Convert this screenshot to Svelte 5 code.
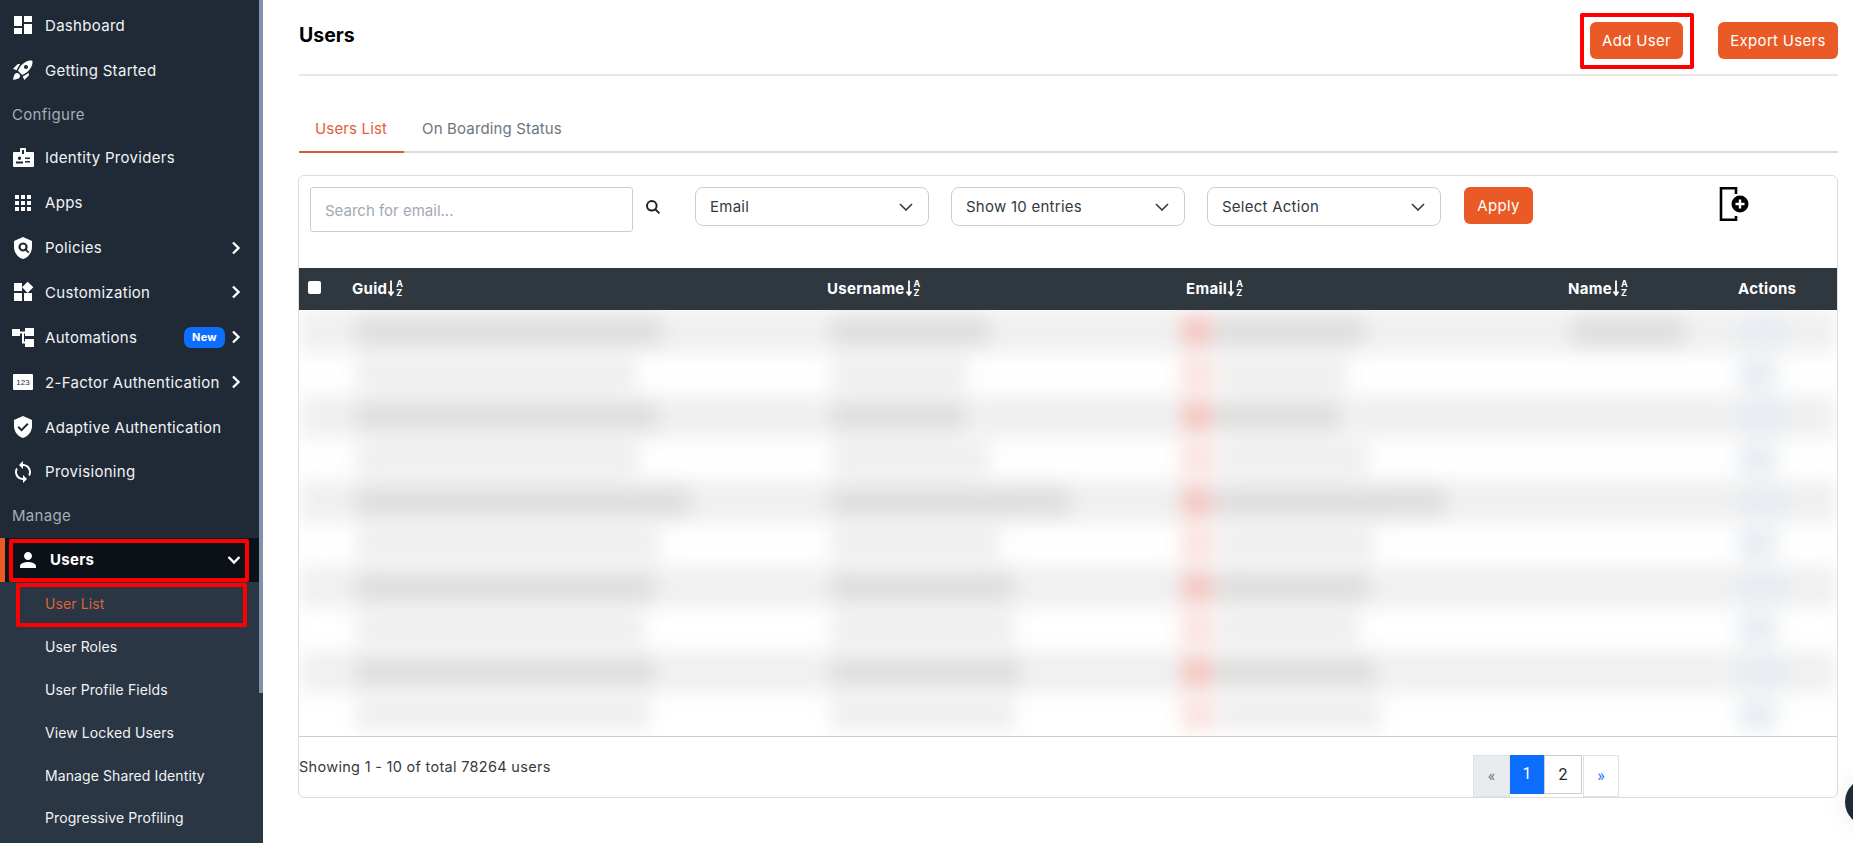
<script>
	const widget = 'M13 13v8h8v-8h-8zM3 21h8v-8H3v8zM3 3v8h8V3H3zm13.66-1.31L11 7.34 16.66 13l5.66-5.66-5.66-5.65z';
	const shield = 'M12 1L3 5v6c0 5.55 3.84 10.74 9 12 5.16-1.26 9-6.45 9-12V5l-9-4z';

	const icons = {
		dashboard: 'M3 13h8V3H3v10zm0 8h8v-6H3v6zm10 0h8V11h-8v10zm0-18v6h8V3h-8z',
		rocket:
			'M9.19 6.35c-2.04 2.29-3.44 5.58-3.57 5.89L2 10.69l4.05-4.05c.47-.47 1.15-.68 1.81-.55l1.33.26zM11.17 17s3.74-1.55 5.89-3.7c5.4-5.4 4.5-9.62 4.21-10.57-.95-.3-5.17-1.19-10.57 4.21C8.55 9.09 7 12.83 7 12.83L11.17 17zm6.48-2.19c-2.29 2.04-5.58 3.44-5.89 3.57L13.31 22l4.05-4.05c.47-.47.68-1.15.55-1.81l-.26-1.33zM9 18c0 .83-.34 1.58-.88 2.12C6.94 21.3 2 22 2 22s.7-4.94 1.88-6.12C4.42 15.34 5.17 15 6 15c1.66 0 3 1.34 3 3zm4-9c0-1.1.9-2 2-2s2 .9 2 2-.9 2-2 2-2-.9-2-2z',
		badge:
			'M2 6h7V3a1 1 0 0 1 1-1h4a1 1 0 0 1 1 1v3h7a1 1 0 0 1 1 1v13a1 1 0 0 1-1 1H3a1 1 0 0 1-1-1V7a1 1 0 0 1 1-1zM11 4v4h2V4zM8.5 10.5a1.7 1.7 0 1 0 0 3.4 1.7 1.7 0 0 0 0-3.4zM5 15.5v2h7v-2zM14 11.5v1.5h5v-1.5zM14 15v1.5h5V15z',
		apps: 'M4 4h4v4H4zM10 4h4v4h-4zM16 4h4v4h-4zM4 10h4v4H4zM10 10h4v4h-4zM16 10h4v4h-4zM4 16h4v4H4zM10 16h4v4h-4zM16 16h4v4h-4z',
		policy: shield + 'M12 6.5a4.5 4.5 0 1 0 2.5 8.2l2.6 2.6 1.3-1.4-2.5-2.5A4.5 4.5 0 0 0 12 6.5zM12 8.6a2.4 2.4 0 1 1 0 4.8 2.4 2.4 0 0 1 0-4.8z',
		widget,
		automation: 'M1 4h8v7H1zM14 3h9v8h-9zM14 14h9v8h-9zM9 6.5h5v2h-1v8h1v2h-3v-10H9z',
		code: 'M3 4h18a1 1 0 0 1 1 1v14a1 1 0 0 1-1 1H3a1 1 0 0 1-1-1V5a1 1 0 0 1 1-1z',
		check: shield + 'M10.5 16.5l-4-4 1.4-1.4 2.6 2.6 5.6-5.6 1.4 1.4z',
		sync: 'M12 4V1L8 5l4 4V6c3.31 0 6 2.69 6 6 0 1.01-.25 1.97-.7 2.8l1.46 1.46C19.54 15.03 20 13.57 20 12c0-4.42-3.58-8-8-8zm0 14c-3.31 0-6-2.69-6-6 0-1.01.25-1.97.7-2.8L5.24 7.74C4.46 8.97 4 10.43 4 12c0 4.42 3.58 8 8 8v3l4-4-4-4v3z',
		person: 'M12 12c2.21 0 4-1.79 4-4s-1.79-4-4-4-4 1.79-4 4 1.79 4 4 4zm0 2c-2.67 0-8 1.34-8 4v2h16v-2c0-2.66-5.33-4-8-4z'
	};

	const menu = [
		{ label: 'Dashboard', icon: 'dashboard' },
		{ label: 'Getting Started', icon: 'rocket' },
		{ section: 'Configure' },
		{ label: 'Identity Providers', icon: 'badge' },
		{ label: 'Apps', icon: 'apps' },
		{ label: 'Policies', icon: 'policy', arrow: true },
		{ label: 'Customization', icon: 'widget', arrow: true },
		{ label: 'Automations', icon: 'automation', arrow: true, isNew: true },
		{ label: '2-Factor Authentication', icon: 'code', arrow: true, digits: true },
		{ label: 'Adaptive Authentication', icon: 'check' },
		{ label: 'Provisioning', icon: 'sync' },
		{ section: 'Manage' }
	];

	const subMenu = ['User List', 'User Roles', 'User Profile Fields', 'View Locked Users', 'Manage Shared Identity', 'Progressive Profiling'];

	const filters = ['Email', 'Show 10 entries', 'Select Action'];
	const columns = ['Guid', 'Username', 'Email', 'Name'];

	// widths of the blurred cell contents, row by row
	const rows = [
		{ guid: 306, user: 158, email: 147, name: 112, action: 50 },
		{ guid: 281, user: 137, email: 130, action: 38 },
		{ guid: 301, user: 134, email: 122, action: 50 },
		{ guid: 284, user: 159, email: 152, action: 38 },
		{ guid: 334, user: 239, email: 228, action: 50 },
		{ guid: 304, user: 169, email: 158, action: 38 },
		{ guid: 299, user: 183, email: 152, action: 50 },
		{ guid: 289, user: 184, email: 142, action: 38 },
		{ guid: 299, user: 189, email: 158, action: 50 },
		{ guid: 294, user: 184, email: 164, action: 38 }
	];
</script>

<div class="page">
	<aside class="sidebar">
		<nav class="menu">
			{#each menu as item}
				{#if item.section}
					<div class="section">{item.section}</div>
				{:else}
					<div class="item">
						<svg class="icon" viewBox="0 0 24 24" fill-rule="evenodd"><path d={icons[item.icon]} />{#if item.digits}<text x="12" y="15" class="digits">123</text>{/if}</svg>
						<span class="label">{item.label}</span>
						{#if item.isNew}<span class="new">New</span>{/if}
						{#if item.arrow}
							<svg class="chevron" viewBox="0 0 10 14"><path d="M2 1.5 7.5 7 2 12.5" /></svg>
						{/if}
					</div>
				{/if}
			{/each}
			<div class="item active">
				<svg class="icon" viewBox="0 0 24 24"><path d={icons.person} /></svg>
				<span class="label">Users</span>
				<svg class="chevron down" viewBox="0 0 14 10"><path d="M1.5 2 7 7.5 12.5 2" /></svg>
				<span class="mark"></span>
			</div>
			<div class="sub">
				{#each subMenu as name, i}
					<div class="sub-item" class:current={i === 0}>
						{name}
						{#if i === 0}<span class="mark"></span>{/if}
					</div>
				{/each}
			</div>
		</nav>
		<span class="thumb"></span>
	</aside>

	<main class="main">
		<header class="top">
			<h1>Users</h1>
			<div class="top-actions">
				<button class="btn add">Add User<span class="mark"></span></button>
				<button class="btn export">Export Users</button>
			</div>
		</header>

		<div class="tabs">
			<span class="tab on">Users List</span>
			<span class="tab">On Boarding Status</span>
		</div>

		<section class="card">
			<div class="toolbar">
				<div class="search">Search for email...</div>
				<svg class="search-icon" viewBox="0 0 16 16"><circle cx="6.8" cy="6.8" r="4.8" /><path d="m10.4 10.4 4 4" /></svg>
				{#each filters as f}
					<div class="select">
						<span>{f}</span>
						<svg viewBox="0 0 14 8"><path d="M1 1l6 6 6-6" /></svg>
					</div>
				{/each}
				<button class="btn apply">Apply</button>
				<svg class="import" viewBox="0 0 31 34">
					<path class="bracket" d="M17 7V1.3H2v31.4h15V29" />
					<circle cx="21" cy="17" r="8.5" />
					<path class="plus" d="M21 12.5v9M16.5 17h9" />
				</svg>
			</div>

			<div class="thead">
				<span class="tick"></span>
				{#each columns as c}
					<span class="th">
						{c}<svg class="sort" viewBox="0 0 8 17"><path d="M4 1v13M1.5 12 4 15.5 6.5 12" /></svg><span class="az"><span>A</span><span>Z</span></span>
					</span>
				{/each}
				<span class="th">Actions</span>
			</div>

			<div class="tbody">
				<div class="blurred">
					{#each rows as r, i}
						<div class="row" class:odd={i % 2 === 0}>
							<span></span>
							<span class="cell"><i style="width: {r.guid}px"></i></span>
							<span class="cell"><i style="width: {r.user}px"></i></span>
							<span class="cell"><i class="red"></i><i style="width: {r.email}px"></i></span>
							<span class="cell">{#if r.name}<i style="width: {r.name}px"></i>{/if}</span>
							<span class="cell"><i class="blue" style="width: {r.action}px"></i></span>
						</div>
					{/each}
				</div>
			</div>

			<footer class="foot">
				<span class="count">Showing 1 - 10 of total 78264 users</span>
				<div class="pager">
					<span class="pg prev">«</span>
					<span class="pg one">1</span>
					<span class="pg two">2</span>
					<span class="pg next">»</span>
				</div>
			</footer>
		</section>
	</main>

	<span class="chat"></span>
</div>

<style>
	:global(body) {
		margin: 0;
		background: #fff;
		overflow: hidden;
	}
	.page {
		display: flex;
		height: 843px;
		overflow: hidden;
		position: relative;
		font-family: Inter, 'Noto Sans', sans-serif;
		font-size: 15px;
		letter-spacing: 0.3px;
		color: #343a40;
	}
	.sidebar {
		width: 263px;
		flex: none;
		background: #1f2a36;
		position: relative;
		overflow: hidden;
	}
	.menu {
		padding-top: 3px;
		color: #f1f3f5;
	}
	.section {
		height: 42.5px;
		line-height: 44.5px;
		padding-left: 12px;
		color: #a5adb5;
	}
	.item {
		height: 44.9px;
		display: flex;
		align-items: center;
		padding: 0 18px 0 11px;
		width: 259px;
		box-sizing: border-box;
		position: relative;
	}
	.icon {
		width: 24px;
		height: 24px;
		margin-right: 10px;
		flex: none;
		fill: #fff;
	}
	.digits {
		font-size: 8px;
		letter-spacing: 0;
		text-anchor: middle;
		fill: #1f2a36;
		font-family: 'Liberation Sans', sans-serif;
	}
	.label {
		flex: 1;
		white-space: nowrap;
	}
	.new {
		background: #0d6efd;
		color: #fff;
		font-size: 11px;
		font-weight: 700;
		width: 41px;
		height: 21px;
		line-height: 21px;
		text-align: center;
		border-radius: 7px;
		margin-right: 6px;
	}
	.chevron {
		width: 10px;
		height: 14px;
		flex: none;
		fill: none;
		stroke: #fff;
		stroke-width: 2.4;
	}
	.chevron.down {
		width: 14px;
		height: 10px;
		margin-right: 0;
	}
	.item.active {
		height: 44px;
		margin-top: 1px;
		background: #0c1117;
		border-left: 5px solid #e95a26;
		padding-left: 11px;
		font-weight: 700;
		color: #fff;
	}
	.sub {
		background: #2a3643;
		padding-top: 1.5px;
		height: 262px;
	}
	.sub-item {
		height: 42.8px;
		line-height: 42.8px;
		padding-left: 45px;
		width: 259px;
		box-sizing: border-box;
		position: relative;
		font-size: 14px;
		letter-spacing: 0.1px;
	}
	.sub-item.current {
		color: #d9653a;
	}
	.mark {
		position: absolute;
		border: 4px solid #f00;
		border-radius: 2px;
		box-sizing: border-box;
		pointer-events: none;
	}
	.item.active .mark {
		inset: 1px 10px 0 4px;
	}
	.sub-item .mark {
		inset: 0 12px -1px 16px;
	}
	.thumb {
		position: absolute;
		top: 0;
		right: 0;
		width: 4px;
		height: 693px;
		background: #7f93aa;
	}

	.main {
		flex: 1;
		min-width: 0;
		padding: 0 15px 0 35px;
	}
	.top {
		height: 74px;
		border-bottom: 2px solid #e7e7e7;
		display: flex;
		justify-content: space-between;
		margin-left: 1px;
	}
	h1 {
		margin: 22px 0 0;
		font-size: 19.5px;
		line-height: 26px;
		font-weight: 700;
		letter-spacing: 0;
		color: #000;
	}
	.top-actions {
		display: flex;
		gap: 35px;
		padding-top: 22px;
		align-items: flex-start;
	}
	.btn {
		height: 37px;
		border: none;
		border-radius: 6px;
		background: #e95a26;
		color: #fff;
		font: inherit;
		letter-spacing: inherit;
		padding: 0;
		white-space: nowrap;
		position: relative;
	}
	.add {
		width: 93px;
	}
	.export {
		width: 120px;
	}
	.add .mark {
		inset: -9px -11px -10px -10px;
	}
	.tabs {
		margin-top: 31px;
		height: 44px;
		border-bottom: 2px solid #ddd;
		display: flex;
		margin-left: 1px;
		letter-spacing: 0.15px;
	}
	.tab {
		padding: 0 17px;
		line-height: 44px;
		height: 44px;
		color: #6c757d;
	}
	.tab.on {
		color: #e2603a;
		border-bottom: 2px solid #cd5f38;
		padding-left: 16px;
		margin-right: 1px;
	}
	.card {
		margin-top: 22px;
		border: 1px solid #ddd;
		border-radius: 6px;
		height: 623px;
		box-sizing: border-box;
		overflow: hidden;
	}
	.toolbar {
		height: 92px;
		padding: 11px 0 0 11px;
		box-sizing: border-box;
		display: flex;
		align-items: flex-start;
	}
	.search {
		width: 323px;
		height: 45px;
		line-height: 45px;
		box-sizing: border-box;
		border: 1px solid #ccc;
		border-radius: 3px;
		padding-left: 14px;
		color: #a3a9b3;
		letter-spacing: 0;
	}
	.search-icon {
		width: 16px;
		height: 16px;
		margin: 12px 34px 0 12px;
		fill: none;
		stroke: #212529;
		stroke-width: 2;
	}
	.select {
		width: 234px;
		height: 39px;
		box-sizing: border-box;
		border: 1px solid #ccc;
		border-radius: 8px;
		padding: 0 15px 0 14px;
		margin-right: 22px;
		display: flex;
		align-items: center;
		justify-content: space-between;
		letter-spacing: 0.25px;
	}
	.select svg {
		width: 14px;
		height: 8px;
		fill: none;
		stroke: #343a40;
		stroke-width: 1.6;
	}
	.apply {
		width: 69px;
		margin-left: 1px;
	}
	.import {
		width: 31px;
		height: 34px;
		margin-left: 186px;
	}
	.import .bracket {
		fill: none;
		stroke: #000;
		stroke-width: 2.6;
	}
	.import .plus {
		fill: none;
		stroke: #fff;
		stroke-width: 2.4;
	}
	.thead,
	.row {
		display: grid;
		grid-template-columns: 53px 475px 359px 382px 170px 1fr;
	}
	.thead {
		height: 42px;
		box-sizing: border-box;
		padding-bottom: 2px;
		background: #2f373f;
		color: #fff;
		font-weight: 700;
		align-items: center;
	}
	.tick {
		width: 13px;
		height: 13px;
		background: #fff;
		border-radius: 2px;
		margin: -2px 0 0 9px;
	}
	.th {
		display: flex;
		align-items: center;
	}
	.sort {
		width: 8px;
		height: 18px;
		fill: none;
		stroke: #fff;
		stroke-width: 1.8;
	}
	.az {
		display: flex;
		flex-direction: column;
		font-size: 9px;
		line-height: 9px;
		margin-left: 1px;
	}
	.tbody {
		height: 426px;
		overflow: hidden;
		border-bottom: 1px solid #ccc;
	}
	.blurred {
		filter: blur(10px);
		margin: -3px -10px 0;
		padding: 3px 10px 0;
	}
	.row {
		height: 42.6px;
		align-items: center;
	}
	.row.odd {
		background: #f0f0f0;
	}
	.cell {
		display: flex;
		gap: 5px;
		padding-left: 4px;
	}
	.cell i {
		display: block;
		height: 30px;
		background: #eeeeee;
	}
	.row.odd .cell i {
		background: #dedede;
	}
	.cell i.red,
	.row.odd .cell i.red {
		width: 30px;
		margin-left: -8px;
		background: #f6c3bd;
	}
	.row:not(.odd) .cell i.red {
		background: #fbdfdb;
	}
	.cell i.blue,
	.row.odd .cell i.blue {
		background: #e6ecf2;
		margin-left: -3px;
	}
	.foot {
		display: flex;
		justify-content: space-between;
		padding-top: 18px;
	}
	.count {
		margin-top: 1px;
		line-height: 22px;
		font-size: 14.5px;
	}
	.pager {
		display: flex;
		align-items: flex-start;
		margin-right: 218px;
		letter-spacing: 0;
	}
	.pg {
		box-sizing: border-box;
		text-align: center;
		height: 39px;
		line-height: 37px;
		font-family: Roboto, sans-serif;
		font-size: 16px;
	}
	.prev {
		width: 37px;
		height: 42px;
		line-height: 40px;
		background: #e9ecef;
		border: 1px solid #dee2e6;
		color: #6c757d;
	}
	.one {
		width: 34px;
		background: #0d6efd;
		color: #fff;
	}
	.two {
		width: 38px;
		border: 1px solid #ccc;
		color: #212529;
	}
	.next {
		width: 36px;
		height: 42px;
		line-height: 40px;
		margin-left: 1px;
		border: 1px solid #dee2e6;
		color: #0d6efd;
	}
	.chat {
		position: absolute;
		left: 1845px;
		top: 778px;
		width: 48px;
		height: 48px;
		border-radius: 50%;
		background: #1f2a36;
		box-shadow: 0 0 24px rgba(0, 0, 0, 0.08);
	}
</style>
